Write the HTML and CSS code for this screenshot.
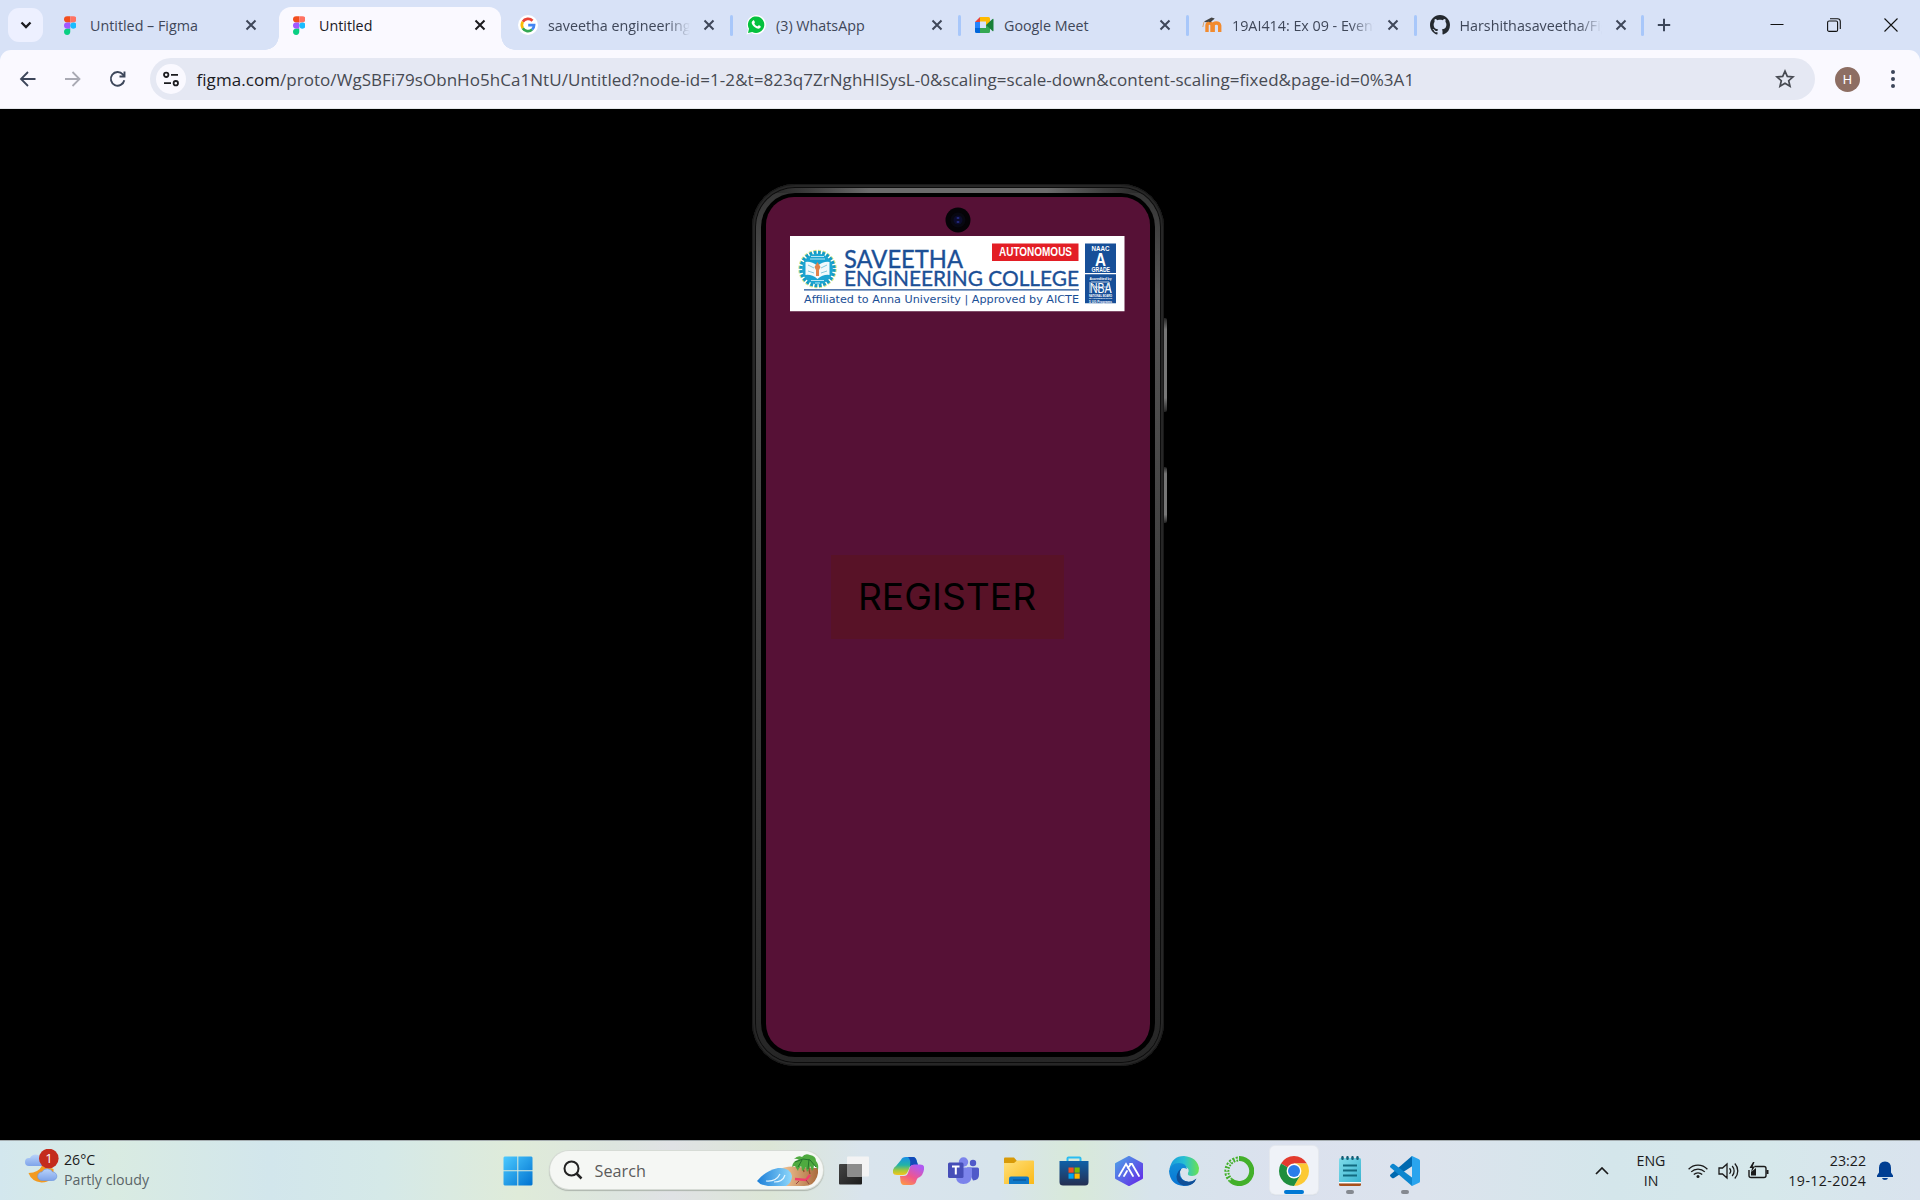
FILE: index.html
```
<!DOCTYPE html>
<html lang="en">
<head>
<meta charset="utf-8">
<title>Untitled</title>
<link rel="stylesheet" href="styles.css">
</head>
<body>
<svg class="defs" width="0" height="0" aria-hidden="true">
  <defs>
    <symbol id="x" viewBox="0 0 12 12"><path d="M1.5 1.5l9 9M10.500 1.500l-9 9" stroke="currentColor" stroke-width="2" fill="none"/></symbol>
    <symbol id="figma" viewBox="0 0 12 18">
      <path d="M3 0h3v6H3a3 3 0 0 1 0-6z" fill="#f24e1e"/><path d="M6 0h3a3 3 0 0 1 0 6H6z" fill="#ff7262"/>
      <path d="M3 6h3v6H3a3 3 0 0 1 0-6z" fill="#a259ff"/><circle cx="9" cy="9" r="3" fill="#1abcfe"/>
      <path d="M3 12h3v3a3 3 0 1 1-3-3z" fill="#0acf83"/>
    </symbol>
  </defs>
</svg>

<header class="tabstrip">
  <button class="tabsearch"><svg width="12" height="8" viewBox="0 0 12 8"><path d="M1.500 1.500L6 6l4.500-4.500" fill="none" stroke="#1b1b1f" stroke-width="2.300"/></svg></button>
  <nav class="tabs">
    <div class="tab"><span class="fav"><svg width="12.500" height="19"><use href="#figma"/></svg></span><span class="title">Untitled – Figma</span><svg class="close"><use href="#x"/></svg></div>
    <div class="tab active"><span class="fav"><svg width="12.500" height="19"><use href="#figma"/></svg></span><span class="title">Untitled</span><svg class="close"><use href="#x"/></svg></div>
    <div class="tab sep"><span class="fav"><svg width="20" height="20" viewBox="0 0 20 20"><circle cx="10" cy="10" r="10" fill="#fff"/><g fill="none" stroke-width="2.700"><path d="M4.800 6.800A6.100 6.100 0 0 1 14.500 5.700" stroke="#ea4335"/><path d="M4.800 6.800a6.100 6.100 0 0 0 0 6.400" stroke="#fbbc05"/><path d="M4.800 13.200a6.100 6.100 0 0 0 9.300 1.400" stroke="#34a853"/><path d="M14.100 14.600A6.100 6.100 0 0 0 16.100 10.100H10.200" stroke="#4285f4"/></g></svg></span><span class="title fade">saveetha engineering college</span><svg class="close"><use href="#x"/></svg></div>
    <div class="tab sep"><span class="fav"><svg width="20" height="20" viewBox="0 0 20 20"><path d="M.5 19.500L2 14.500A9.600 9.600 0 1 1 5.500 18z" fill="#fff"/><path d="M2 18l1-4.200a8.200 8.200 0 1 1 3.200 3.100z" fill="#05c13e"/><path d="M6.800 5.700c.8-.8 1.500-.3 2 1.200.4.900-.8 1.300-.3 2 .7 1.100 1.600 1.900 2.800 2.400.6.200 1.100-1.200 1.700-1 1.800.7 2 1 1.500 2.200-.6 1.200-2.300 1.500-4 .7-2.300-1-3.800-2.600-4.700-4.700-.4-1.200.2-2.200 1-2.800z" fill="#fff"/></svg></span><span class="title">(3) WhatsApp</span><svg class="close"><use href="#x"/></svg></div>
    <div class="tab sep"><span class="fav"><svg width="19" height="16" viewBox="0 0 19 16"><path d="M0 5L5 0v5z" fill="#ea4335"/><path d="M0 5h5v6H0z" fill="#2684fc"/><path d="M0 11h5v5H1.500Q0 16 0 14.500z" fill="#0066da"/><path d="M5 0h8.500Q15 0 15 1.500V8h-4V4.500H5z" fill="#ffba00"/><path d="M5 11h6V8h4v6.500Q15 16 13.500 16H5z" fill="#34a853"/><path d="M11 8l6.500-6q1-.7 1 .5v11q0 1.200-1 .5z" fill="#188038"/></svg></span><span class="title">Google Meet</span><svg class="close"><use href="#x"/></svg></div>
    <div class="tab sep"><span class="fav"><svg width="20" height="16" viewBox="0 0 20 16"><path d="M5 15V8.500q0-2.500 2.500-2.500T10 8.500V15M11.200 15V8.500q0-2.500 3-2.500t3.500 2.500V15" fill="none" stroke="#f28b2f" stroke-width="3.400"/><path d="M2 4.500L9.500.5l3.300 1-4.600 4-1.500-.7-3 .5z" fill="#444"/><path d="M2 5L.8 10" stroke="#d8a472" stroke-width="1"/></svg></span><span class="title fade">19AI414: Ex 09 - Event management</span><svg class="close"><use href="#x"/></svg></div>
    <div class="tab sep"><span class="fav"><svg width="20" height="20" viewBox="0 0 16 16"><path fill="#24292f" d="M8 0C3.580 0 0 3.580 0 8c0 3.540 2.290 6.530 5.470 7.590.4.070.55-.17.55-.38 0-.19-.01-.82-.01-1.490-2.010.37-2.530-.49-2.690-.94-.09-.23-.48-.94-.82-1.130-.28-.15-.68-.52-.01-.53.63-.01 1.080.58 1.230.82.72 1.210 1.870.87 2.330.66.070-.52.28-.87.51-1.070-1.780-.2-3.640-.89-3.640-3.950 0-.87.31-1.590.82-2.150-.08-.2-.36-1.020.08-2.120 0 0 .67-.21 2.200.82.640-.18 1.320-.27 2-.27s1.360.09 2 .27c1.530-1.040 2.200-.82 2.200-.82.44 1.100.16 1.920.08 2.120.51.56.82 1.270.82 2.150 0 3.070-1.870 3.750-3.650 3.950.29.25.54.73.54 1.480 0 1.070-.01 1.930-.01 2.200 0 .21.15.46.55.38A8.010 8.010 0 0 0 16 8c0-4.420-3.580-8-8-8z"/></svg></span><span class="title fade">Harshithasaveetha/Figma</span><svg class="close"><use href="#x"/></svg></div>
  </nav>
  <svg class="newtab" width="14" height="14" viewBox="0 0 14 14"><path d="M7 .8v12.400M.8 7h12.400" stroke="#3c465a" stroke-width="2"/></svg>
  <div class="winctl">
    <svg width="14" height="14" viewBox="0 0 14 14"><path d="M.5 6.500h13" stroke="#111"/></svg>
    <svg width="14" height="14" viewBox="0 0 14 14"><rect x=".6" y="3" width="10" height="10.400" rx="1.500" fill="none" stroke="#111" stroke-width="1.100"/><path d="M3 .8h7.500q2.800 0 2.800 2.800V11" fill="none" stroke="#111" stroke-width="1.100"/></svg>
    <svg width="14" height="14" viewBox="0 0 14 14"><path d="M.5.5l13 13M13.500.5l-13 13" stroke="#111" stroke-width="1.100"/></svg>
  </div>
</header>

<div class="toolbar-bg">
  <div class="toolbar">
    <svg class="navi" viewBox="0 0 20 20"><path d="M17.500 10H3.500M10 3l-7 7 7 7" fill="none" stroke="#3c465a" stroke-width="1.800"/></svg>
    <svg class="navi" viewBox="0 0 20 20"><path d="M2 10h14M9.500 3l7 7-7 7" fill="none" stroke="#a9aab4" stroke-width="1.800"/></svg>
    <svg class="navi" viewBox="0 0 20 20"><path d="M16.300 11.300A6.800 6.800 0 1 1 14.800 5.400L16.500 7.100M16.500 2.500v5h-5" fill="none" stroke="#3c465a" stroke-width="1.900"/></svg>
    <div class="omnibox">
      <span class="siteinfo"><svg width="16" height="16" viewBox="0 0 16 16" fill="none" stroke="#1b1b1f" stroke-width="1.800"><circle cx="3.200" cy="3.800" r="2.200"/><path d="M8 3.800h7M1 12.200h7"/><circle cx="12.800" cy="12.200" r="2.200"/></svg></span>
      <span class="url"><b>figma.com</b>/proto/WgSBFi79sObnHo5hCa1NtU/Untitled?node-id=1-2&amp;t=823q7ZrNghHISysL-0&amp;scaling=scale-down&amp;content-scaling=fixed&amp;page-id=0%3A1</span>
      <svg class="star" width="20" height="20" viewBox="0 0 20 20"><path d="M10 2.200l2.300 5.200 5.700.5-4.300 3.800 1.300 5.600-5-3-5 3 1.300-5.600L2 7.900l5.700-.5z" fill="none" stroke="#474a52" stroke-width="1.700"/></svg>
    </div>
    <span class="avatar">H</span>
    <svg class="dots" width="6" height="20" viewBox="0 0 6 20" fill="#3c465a"><circle cx="3" cy="3" r="2"/><circle cx="3" cy="10" r="2"/><circle cx="3" cy="17" r="2"/></svg>
  </div>
</div>

<main class="stage">
  <div class="phone">
    <i class="key power"></i><i class="key volume"></i>
    <div class="rim"><div class="bezel"><div class="screen">
      <svg class="camera" width="26" height="26" viewBox="0 0 26 26"><circle cx="13" cy="13" r="12.500" fill="#050307"/><circle cx="13" cy="13" r="7.500" fill="#080811"/><circle cx="13" cy="13" r="4.500" fill="#0b0b2c"/><ellipse cx="13" cy="11" rx="1.500" ry="1" fill="#242b80"/><ellipse cx="13" cy="15" rx="1.500" ry="1" fill="#242b80"/></svg>
      <svg class="logo" width="335" height="76" viewBox="0 0 335 76">
        <path fill="#fff" d="M0 0h334.500v75.300H0z"/>
        <circle cx="27.500" cy="33" r="17" fill="none" stroke="#d9e68a" stroke-width="4.500" stroke-dasharray="2.900 1.550"/>
        <circle cx="27.500" cy="33" r="16.500" fill="none" stroke="#139bc9" stroke-width="3.400" stroke-dasharray="2.770 1.550"/>
        <circle cx="27.500" cy="33" r="15.300" fill="#1ba4d2"/>
        <path d="M15.500 26q6-1 12 4 6-5 12-4v13q-6-1-12 4-6-5-12-4z" fill="#f2fafc"/>
        <path d="M18 29l6 3M18 35l6 2M31 32l6-3M31 37l6-2" stroke="#85c9dd"/>
        <path d="M27.500 26l3 5-1.500 3v6h-3v-6l-1.500-3z" fill="#e3824a"/>
        <path d="M21 20.500h13M20 23h15M21 44.500h13M25 47h5" stroke="#b8e5f2" stroke-width="1.200"/>
        <g fill="#1b4f96" stroke="#1b4f96" stroke-width=".35" font-family="Lato, sans-serif">
          <text x="54" y="31.500" font-size="24.500" textLength="119" lengthAdjust="spacingAndGlyphs">SAVEETHA</text>
          <text x="54" y="50.200" font-size="21" textLength="235" lengthAdjust="spacingAndGlyphs">ENGINEERING COLLEGE</text>
        </g>
        <path d="M14 53.800h275" stroke="#1b4f96" stroke-width="1.200"/>
        <text x="14" y="66.500" font-family="DejaVu Sans, sans-serif" font-size="10.500" fill="#1b4f96" textLength="275" lengthAdjust="spacingAndGlyphs">Affiliated to Anna University | Approved by AICTE</text>
        <path d="M202 7.500h86.500V25H202z" fill="#e31e25"/>
        <text x="209" y="20.300" font-family="Liberation Sans Narrow, Liberation Sans, sans-serif" font-weight="700" font-size="12.500" fill="#fff" textLength="73" lengthAdjust="spacingAndGlyphs">AUTONOMOUS</text>
        <path d="M295 7.500h31V37h-31zM295 38.300h31v29h-31z" fill="#174f98"/>
        <g fill="#fff" font-family="Liberation Sans, sans-serif" font-weight="700">
          <text x="301.500" y="14.500" font-size="7" textLength="18" lengthAdjust="spacingAndGlyphs">NAAC</text>
          <text x="305" y="29.500" font-size="19" textLength="11" lengthAdjust="spacingAndGlyphs">A</text>
          <text x="301.500" y="35.800" font-size="6.500" textLength="18.500" lengthAdjust="spacingAndGlyphs">GRADE</text>
          <text x="299.500" y="43.500" font-size="4" textLength="22" lengthAdjust="spacingAndGlyphs">Accredited by</text>
          <text x="300" y="57" font-size="15" font-weight="400" textLength="21.500" lengthAdjust="spacingAndGlyphs">NBA</text>
          <text x="299" y="60.500" font-size="2.800" textLength="23" lengthAdjust="spacingAndGlyphs">NATIONAL BOARD</text>
          <text x="299" y="63.200" font-size="2.400" textLength="23" lengthAdjust="spacingAndGlyphs">of ACCREDITATION</text>
          <text x="299" y="66.500" font-size="3.400" textLength="23" lengthAdjust="spacingAndGlyphs">5 UG Programs</text>
        </g>
        <path d="M301 46h18l2 11M300 46v11M303 48l7 9M304 51h14" fill="none" stroke="#fff" stroke-width=".7"/>
      </svg>
      <button class="register">REGISTER</button>
    </div></div></div>
  </div>
</main>

<footer class="taskbar">
  <div class="weather">
    <svg width="38" height="36" viewBox="0 0 38 36">
      <defs><linearGradient id="cl" x2="0" y2="1"><stop stop-color="#b9d3fa"/><stop offset="1" stop-color="#7fa4ea"/></linearGradient></defs>
      <path d="M4 17a4 4 0 0 1 0-8h1a6 6 0 0 1 11 0h4v8z" fill="url(#cl)"/>
      <path d="M3.500 24q10 0 14-8l11 4q1 13-12 13.500-10-1-13-9.500z" fill="#f39a1f"/>
      <path d="M17 31.500a4.300 4.300 0 0 1 0-8.600 6 6 0 0 1 10.500 0 4.300 4.300 0 0 1 0 8.600z" fill="url(#cl)" stroke="#6f97df" stroke-width=".7"/>
      <circle cx="23.800" cy="9.500" r="9.800" fill="#c42b1c"/><text x="24" y="14.200" fill="#fff" font-size="13" text-anchor="middle" font-family="Open Sans, sans-serif">1</text>
    </svg>
    <div><div>26°C</div><div class="dim">Partly cloudy</div></div>
  </div>

  <div class="apps">
    <span class="app"><svg width="30" height="30" viewBox="0 0 30 30"><defs><linearGradient id="win" x2="1" y2="1"><stop stop-color="#4ccaff"/><stop offset="1" stop-color="#0072d0"/></linearGradient></defs><path d="M1.500.5H14.300V14.300H.5V1.500zM15.300.5h13.200l1 1V14.300H15.300zM.5 15.300h13.800v14.200H1.500l-1-1zM15.300 15.300h14.200v13.200l-1 1H15.300z" fill="url(#win)"/></svg></span>
    <div class="search">
      <svg width="20" height="20" viewBox="0 0 20 20" fill="none" stroke="#222" stroke-width="2"><circle cx="8.500" cy="8.500" r="7"/><path d="M13.500 13.500l5 5" stroke-width="2.500"/></svg>
      <span>Search</span>
      <svg class="beach" width="64" height="36" viewBox="0 0 64 36">
        <defs><linearGradient id="sea"><stop stop-color="#1c7fd8"/><stop offset="1" stop-color="#8fd8fb"/></linearGradient><linearGradient id="sand"><stop stop-color="#ffd3a4"/><stop offset="1" stop-color="#a96b3c"/></linearGradient></defs>
        <path d="M20 18q12-5 22-3 12 1 20 1 1 10-6 16-3 2-8 2H28z" fill="url(#sand)"/>
        <path d="M1 29Q9 19 22 16q12-1 14 8 0 7-6 10H12Q4 33 1 29z" fill="url(#sea)"/>
        <path d="M10 29q10 1 14-7M18 30q9 0 11-7" stroke="#e4f6ff" stroke-width="1.200" fill="none"/>
        <path d="M47 7q-1 7 1 13M54 9q-2 7 0 13" stroke="#8a4f28" stroke-width="1.300" fill="none"/>
        <path d="M36 15q1-7 7-7-3-2-5-1 4-4 8-2 3-4 8-2 6 1 6 6 3 3 2 9-2-4-4-5 0 4-2 6-1-3-2-5-1 4-3 6-1-3-1-5-2 3-4 4 0-3-1-5-3 3-3 5-2-3-3-5-2 0-3 1z" fill="#4faa3f"/><path d="M39 10l8-3 7 1 6 7M46 8l-4 7M53 7l-1 10" stroke="#23742a" fill="none"/>
        <path d="M39 27l11 1 4-5" stroke="#ef3f6b" stroke-width="2.400" fill="none"/><path d="M43 29l-3 3M50 28l3 4" stroke="#944"/>
      </svg>
    </div>
    <span class="app"><svg width="30" height="30" viewBox="0 0 30 30"><defs><linearGradient id="tv" x2="1" y2="1"><stop stop-color="#444"/><stop offset="1" stop-color="#1c1c1c"/></linearGradient></defs><rect y="8" width="23" height="20.500" rx="1" fill="url(#tv)"/><rect x="8" y=".5" width="22" height="20" rx="1" fill="#f3f3f4"/><path d="M8 8h15v12.500H8z" fill="#8c8c8c"/></svg></span>
    <span class="app"><svg width="31" height="28" viewBox="0 0 31 28"><defs><linearGradient id="c1" x2="0" y2="1"><stop stop-color="#1a8fe8"/><stop offset=".45" stop-color="#22b3a6"/><stop offset=".75" stop-color="#a7c83a"/><stop offset="1" stop-color="#f5c51c"/></linearGradient><linearGradient id="c2" x1=".6" x2="0" y2="1"><stop stop-color="#b05af0"/><stop offset=".5" stop-color="#f0568d"/><stop offset="1" stop-color="#ffa13c"/></linearGradient></defs><path d="M8 3q1-3 5-3h7q3 0 4 5l1 3h-5q-3 0-4 4l-2 4q-1 2-4 2H4q-5 0-4-5 1-3 3-4z" fill="url(#c1)"/><path d="M15 0h5q3 0 4 5l1 3h-5q-2 0-3 2 1-8-2-10z" fill="#124ab8"/><path d="M23 25q-1 3-5 3h-7q-3 0-3.500-4L7 19h4q3 0 4-3l2-6q1-2.500 4-2.500h6q5 0 4 5-1 6-5 8-2 0-3 4.500z" fill="url(#c2)"/></svg></span>
    <span class="app"><svg width="31" height="27" viewBox="0 0 31 27"><circle cx="15.500" cy="5" r="4.700" fill="#7b83eb"/><circle cx="25" cy="6" r="3.200" fill="#5059c9"/><path d="M19 10.500h10.500q1.500 0 1.500 1.500v6q0 5-6 5.500z" fill="#5059c9"/><path d="M8 10.500h14.500q1.500 0 1.500 1.500v7q-1 8-8.500 8T8 19z" fill="#7b83eb"/><rect y="5.500" width="15.500" height="15.500" rx="1.500" fill="#464eb8"/><path d="M4 9.500h7.500M7.800 9.500v8" stroke="#fff" stroke-width="2"/></svg></span>
    <span class="app"><svg width="30" height="28" viewBox="0 0 30 28"><defs><linearGradient id="fo" x2="1" y2="1"><stop stop-color="#ffe07a"/><stop offset="1" stop-color="#fbb917"/></linearGradient></defs><path d="M0 1.500Q0 .5 1 .5h9l3 3.500v5H0z" fill="#d89a08"/><path d="M0 6h10l3-2.500h16q1 0 1 1V27H0z" fill="url(#fo)"/><path d="M5 27v-5.500q0-2 2-2h16q2 0 2 2V27z" fill="#0e78c8"/><path d="M9 23h13" stroke="#0a4a86"/></svg></span>
    <span class="app"><svg width="30" height="30" viewBox="0 0 30 30"><defs><linearGradient id="st" x2="0" y2="1"><stop stop-color="#0f60a8"/><stop offset="1" stop-color="#252f52"/></linearGradient></defs><path d="M8.500 6V2.500q0-1 1-1h11q1 0 1 1V6" fill="none" stroke="#2bbdf2" stroke-width="2"/><path d="M.5 5h29v21q0 3.500-3.500 3.500H4Q.5 29.500.5 26z" fill="url(#st)"/><path d="M9.500 11.500h5.200v5.200H9.500z" fill="#f25022"/><path d="M15.500 11.500h5.200v5.200h-5.200z" fill="#7fba00"/><path d="M9.500 17.500h5.200v5.200H9.500z" fill="#00a4ef"/><path d="M15.500 17.500h5.200v5.200h-5.200z" fill="#ffb900"/></svg></span>
    <span class="app"><svg width="28" height="30" viewBox="0 0 28 30"><defs><linearGradient id="ai" x2="1" y2="1"><stop stop-color="#4ea3e6"/><stop offset="1" stop-color="#6426e8"/></linearGradient></defs><path d="M14 1l13 7v14l-13 7-13-7V8z" fill="url(#ai)" stroke="url(#ai)" stroke-width="2" stroke-linejoin="round"/><path d="M4 20L11 8l7 12M9 20l3-5M15 8h2l7 12M13 12l3-4" fill="none" stroke="#fff" stroke-width="1.800" stroke-linecap="round"/></svg></span>
    <span class="app"><svg width="30" height="30" viewBox="0 0 30 30"><defs><linearGradient id="e1"><stop stop-color="#189bdc"/><stop offset=".5" stop-color="#27bfd3"/><stop offset="1" stop-color="#6be34f"/></linearGradient><linearGradient id="e2" x2="0" y2="1"><stop stop-color="#128fd8"/><stop offset="1" stop-color="#0874d4"/></linearGradient></defs><path d="M.5 13Q3 0 15 0q13 1 15 12 0 8-7 8-5 0-4-3 2-4-2-6-8-5-16.500 2z" fill="url(#e1)"/><path d="M0 15Q2 7 10 7q7 0 8 6-6-3-7 3 0 9 9 10 4 0 6-1-4 5-11 5Q1 29 0 15z" fill="url(#e2)"/><path d="M12.500 12.500q-5 7 2 12 7 3 13-2-3 8-13 7-7-2-7-9 1-6 5-8z" fill="#0f4f98"/></svg></span>
    <span class="app"><svg width="30" height="30" viewBox="0 0 30 30" fill="none" stroke="#43b02a"><path d="M15 2.500a12.500 12.500 0 1 1-8.500 21.500" stroke-width="5"/><path d="M14 3A12.300 12.300 0 0 0 6.500 24" stroke-width="5" stroke-dasharray="2 1.300"/><path d="M14 3A12.300 12.300 0 0 0 6.500 24" stroke="#dce5ec" stroke-width="1.200" stroke-dasharray="3 2"/></svg></span>
    <span class="app current"><svg width="30" height="30" viewBox="0 0 30 30"><path d="M15 15L2.010 7.500A15 15 0 0 1 27.990 7.500H15z" fill="#e33b2e"/><path d="M15 15V7.500h12.990A15 15 0 0 1 15 30l6.500-11.250z" fill="#fcc934"/><path d="M15 15l6.500 3.750L15 30A15 15 0 0 1 2.010 7.500z" fill="#1e8e3e"/><circle cx="15" cy="15" r="7.400" fill="#fff"/><circle cx="15" cy="15" r="6" fill="#2b7de9"/></svg><i class="mark"></i></span>
    <span class="app"><svg width="22" height="30" viewBox="0 0 22 30"><defs><linearGradient id="np" x2="1" y2="1"><stop stop-color="#7fdcea"/><stop offset="1" stop-color="#37b2cf"/></linearGradient></defs><rect y="2" width="22" height="25" rx="1.500" fill="url(#np)"/><path d="M0 26h22v1.200H0z" fill="#fff"/><path d="M0 27.500h22v1q0 1.500-1.500 1.500h-19Q0 30 0 28.500z" fill="#a8501a"/><path d="M4 9.500h14M4 14.500h14M4 19.500h14" stroke="#126a80" stroke-width="1.800"/><path d="M3.500 1.200v1.500M8.500 1.200v1.500M13.500 1.200v1.500M18.500 1.200v1.500" stroke="#155d75" stroke-width="2.500" stroke-linecap="round"/></svg><i class="mark"></i></span>
    <span class="app"><svg width="30" height="30" viewBox="0 0 30 30"><path d="M22 0l2 9L4 22q-1 .6-2 0L.5 20.500q-1-1 0-2z" fill="#0069b0"/><path d="M.5 9.500L2 8q1-.7 2 0l20 15-2 7L.5 11.500q-1-1 0-2z" fill="#0d86cf"/><path d="M22 0l7 3.200q1 .5 1 1.600v20.400q0 1.100-1 1.600L22 30q-1-.5 0-2V2q-1-1.500 0-2z" fill="#29a4ee"/></svg><i class="mark"></i></span>
  </div>

  <div class="tray">
    <svg class="chev" width="14" height="8" viewBox="0 0 14 8"><path d="M1 7l6-6 6 6" fill="none" stroke="#1a1a1a" stroke-width="1.700"/></svg>
    <div class="lang">ENG<br>IN</div>
    <svg class="wifi" width="20" height="16" viewBox="0 0 20 16" fill="none" stroke="#1a1a1a" stroke-width="1.300"><path d="M.6 6.200a13 13 0 0 1 18.800 0M3.200 8.900a9.500 9.500 0 0 1 13.600 0M5.800 11.500a6 6 0 0 1 8.400 0"/><circle cx="10" cy="13.500" r="1.500" fill="#1a1a1a" stroke="none"/></svg>
    <svg class="vol" width="21" height="18" viewBox="0 0 21 18" fill="none" stroke="#1a1a1a" stroke-width="1.300"><path d="M1 6h3.500L9 2v14l-4.500-4H1zM11.500 6.300a4 4 0 0 1 0 5.400M14.200 4a7.500 7.500 0 0 1 0 10M16.800 1.500a11 11 0 0 1 0 15"/></svg>
    <svg class="bat" width="21" height="18" viewBox="0 0 21 18"><path d="M6.500 4.500h9.500q2 0 2 2v7q0 2-2 2H3q-2 0-2-2V8" fill="none" stroke="#1a1a1a" stroke-width="1.400"/><path d="M18.500 8h2v4h-2zM3 13.500V10l5-4v7.500z" fill="#1a1a1a"/><path d="M5 0L1.500 6H4l-1 4.500L7 4.500H4.700L6.500 0z" fill="#1a1a1a"/></svg>
    <div class="clock">23:22<br><span class="date">19-12-2024</span></div>
    <svg class="bell" width="16" height="20" viewBox="0 0 16 20" fill="#003e92"><path d="M8 .5q6 .3 6 6.500v4.500l2 3V16H0v-1.500l2-3V7Q2 .8 8 .5zM5 17h6q-.5 2-3 2t-3-2z"/></svg>
  </div>
</footer>
</body>
</html>
```
FILE: styles.css
```
* { box-sizing: border-box; }
body { margin: 0; width: 1920px; height: 1200px; overflow: hidden; display: flex; flex-direction: column; background: #000; font-family: "Open Sans", "Noto Sans", sans-serif; }
svg { display: block; flex: none; }
.defs { position: absolute; }
button { border: 0; padding: 0; font: inherit; }

.tabstrip { height: 50px; flex: none; display: flex; background: #d8e2f7; }
.tabsearch { width: 35px; height: 34px; margin: 8px 3px 0 8px; border-radius: 11px; background: #edf0ff; display: flex; align-items: center; justify-content: center; }
.tabs { display: grid; grid-template-columns: 229px 229px 228px 228px 228px 227.500px 227px; }
.tab { position: relative; display: flex; align-items: center; height: 50px; padding-left: 14px; color: #3f4759; font-size: 14.3px; }
.fav { width: 20px; flex: none; display: flex; justify-content: center; }
.title { width: 143px; flex: none; margin-left: 10px; overflow: hidden; white-space: nowrap; line-height: 24px; padding-top: 1px; }
.fade { -webkit-mask-image: linear-gradient(90deg, #000 118px, transparent 142px); mask-image: linear-gradient(90deg, #000 118px, transparent 142px); }
.close { width: 12px; height: 12px; margin-left: 12px; color: #3f4759; }
.active { color: #1b1b1f; }
.active > * { z-index: 1; }
.active .close { color: #1b1b1f; }
.active::before { content: ""; position: absolute; left: 4px; right: 3px; top: 7px; bottom: 0; border-radius: 12px 12px 0 0; background: #faf9ff; }
.active::after { content: ""; position: absolute; left: -10px; right: -11px; bottom: 0; height: 14px; background: radial-gradient(circle at 0 0, transparent 13.5px, #faf9ff 14px) left / 14px 14px no-repeat, radial-gradient(circle at 100% 0, transparent 13.5px, #faf9ff 14px) right / 14px 14px no-repeat; }
.sep::after { content: ""; position: absolute; right: -1px; top: 15px; width: 3px; height: 21px; border-radius: 2px; background: #a8c7fa; }
.newtab { margin: 18px 0 0 14px; }
.winctl { margin: 18px 22px 0 auto; display: flex; gap: 43px; }

.toolbar-bg { height: 59px; flex: none; background: #d8e2f7; }
.toolbar { height: 59px; display: flex; align-items: center; background: #faf9ff; border-radius: 11px 11px 0 0; border-bottom: 1px solid #e3e6ea; padding-left: 18px; }
.navi { width: 20px; height: 20px; margin-right: 25px; }
.omnibox { width: 1665px; height: 42px; margin-left: -3px; border-radius: 21px; background: #e5e8f3; display: flex; align-items: center; padding-left: 6px; }
.siteinfo { width: 30px; height: 30px; border-radius: 50%; background: #faf9ff; display: flex; align-items: center; justify-content: center; }
.url { margin-left: 10.500px; font-size: 17px; letter-spacing: .05px; line-height: 30px; color: #474a52; white-space: nowrap; padding-top: 1px; }
.url b { font-weight: 400; color: #1b1b1f; }
.star { margin: 0 20px 0 auto; }
.avatar { width: 25px; height: 25px; margin-left: 20px; border-radius: 50%; background: #8d6e63; color: #fff; font: 13px/25px Roboto, sans-serif; text-align: center; }
.dots { margin-left: 29.500px; }

.stage { flex: 1; display: flex; justify-content: center; padding-top: 75px; background: #000; }
.phone { position: relative; width: 412px; height: 882px; margin-right: 4px; padding: 4px; border-radius: 43px; background: #202020; box-shadow: inset 0 0 0 1px #191919, inset 0 0 0 3px #262626, inset 0 0 0 4px #0c0c0c; }
.rim { height: 100%; padding: 5px; border-radius: 39px; background: linear-gradient(90deg, #1c1c1c 0, #3e3e3e 14%, #6b6b6b 28%, #6b6b6b 72%, #3e3e3e 86%, #1c1c1c 100%) top / 100% 5px no-repeat, linear-gradient(#333 0, #555 12%, #3c3c3c 50%, #262626 100%); }
.bezel { height: 100%; padding: 4px 5px 5px; border-radius: 34px; background: #000; }
.screen { height: 100%; border-radius: 28px; background: #561136; display: flex; flex-direction: column; align-items: center; }
.camera { margin: 10px 0 3px; }
.logo { margin-right: 1px; }
.register { width: 233px; height: 84px; margin-top: 243px; margin-right: 22px; background: #581227; color: #000; font: 37.2px/84px Inter, sans-serif; text-align: center; }
.key { position: absolute; left: 412px; width: 3px; border-radius: 0 2px 2px 0; background: linear-gradient(#222, #747474 12%, #777 85%, #222); }
.power { top: 134px; height: 94px; }
.volume { top: 283px; height: 56px; }

.taskbar { height: 60px; flex: none; display: grid; grid-template-columns: 493.500px 1fr auto; border-top: 1px solid #a5adb0; background: linear-gradient(90deg, #d3e7ee 0, #d9ebe2 6%, #d2e6ec 14%, #d5e9e8 20%, #dfebd9 27%, #dde5df 32%, #e0e2e5 35%, #dce6d6 40%, #d9e4ed 45%, #d7e4ec 52%, #d8e9d9 56%, #d7e4ec 60%, #dbe1ee 67%, #dce3ed 74%, #d4e6eb 84%, #d6e8eb 92%, #d9e3ee 100%); color: #1b1b1b; font-size: 14.2px; }
.weather { display: flex; padding: 8px 0 0 25px; gap: 1px; line-height: 20px; }
.weather > div { padding-top: 1px; }
.dim { color: #5b6568; }
.apps { display: flex; gap: 7.1px; padding-top: 5px; }
.app { position: relative; width: 48px; height: 48px; flex: none; border-radius: 5px; display: flex; align-items: center; justify-content: center; padding-top: 1px; }
.current { background: #eff2f8; box-shadow: 0 0 0 1px #e4e8ee, 0 1px 1px #b9c0c8; }
.mark { position: absolute; left: 20px; bottom: 0; width: 8px; height: 4px; border-radius: 2px; background: #858990; }
.current .mark { left: 14px; width: 20px; background: #0078d4; }
.search { width: 273px; height: 38px; margin: 5px 0 0 1px; border-radius: 19px; background: #f5f7f4; box-shadow: 0 0 0 1px #d6dbd5, 0 1px 1px 1px #adb5ad; display: flex; align-items: center; padding-left: 13px; font-size: 16.2px; color: #5b5b5b; }
.search span { margin-left: 12px; padding-top: 1px; }
.beach { margin: 0 3px 0 auto; }
.tray { display: flex; align-items: center; padding-right: 27px; line-height: 20px; }
.chev { margin-right: 1px; }
.lang { width: 60px; margin-left: 11px; text-align: center; padding-top: 1px; }
.wifi { margin-left: 7px; }
.vol { margin-left: 10px; }
.bat { margin-left: 9px; }
.clock { width: 97px; text-align: right; padding-top: 1px; }
.date { letter-spacing: .4px; margin-right: -.4px; }
.bell { margin-left: 11px; }
```
